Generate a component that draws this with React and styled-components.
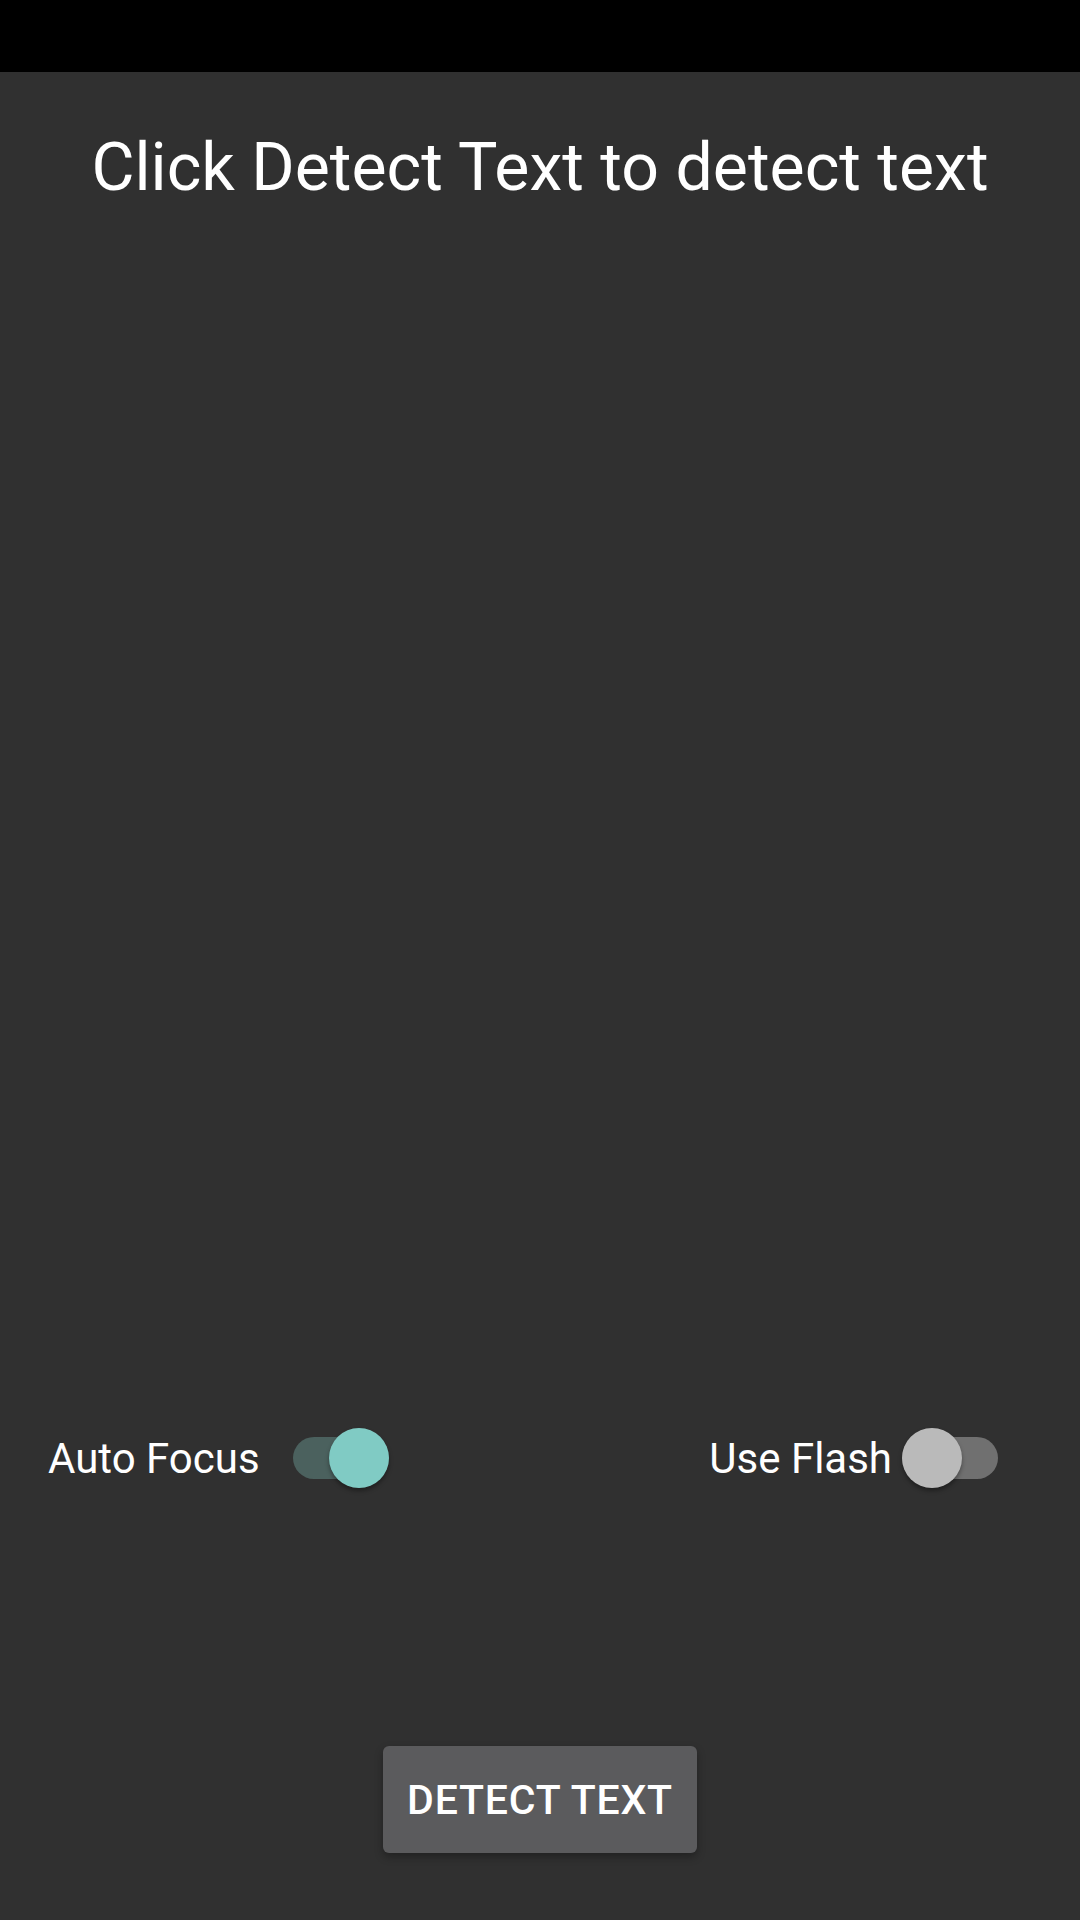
import React from 'react';
import styled, { createGlobalStyle } from 'styled-components';

const GlobalStyle = createGlobalStyle`
  html, body {
    margin: 0;
    padding: 0;
    background: #303030;
  }
  body {
    font-family: Roboto, "Noto Sans", "Liberation Sans", sans-serif;
  }
`;

function Switch({ checked, label, gap }) {
  return (
    <SwitchGroup gap={gap}>
      <Label>{label}</Label>
      <Track checked={checked}>
        <Thumb checked={checked} />
      </Track>
    </SwitchGroup>
  );
}

export default function App() {
  return (
    <>
      <GlobalStyle />
      <Screen>
        <StatusBar />
        <Title>Click Detect Text to detect text</Title>
        <Preview />
        <Controls>
          <Switch label="Auto Focus" checked gap="33px" />
          <Switch label="Use Flash" gap="10px" />
        </Controls>
        <ButtonBar>
          <DetectButton>Detect Text</DetectButton>
        </ButtonBar>
      </Screen>
    </>
  );
}

const Screen = styled.div`
  display: flex;
  flex-direction: column;
  min-height: 1920px;
  background: #303030;
  color: #fff;
`;

const StatusBar = styled.div`
  height: 72px;
  background: #000;
`;

const Title = styled.h1`
  margin: 57px 0 0;
  font-size: 66.2px;
  font-weight: 400;
  line-height: normal;
  text-align: center;
  color: #fff;
`;

const Preview = styled.div`
  flex: 1;
`;

const Controls = styled.div`
  display: flex;
  justify-content: space-between;
  align-items: center;
  height: 60px;
  padding: 0 82px 0 48px;
  margin-bottom: 258px;
`;

const SwitchGroup = styled.div`
  display: flex;
  align-items: center;
  gap: ${({ gap }) => gap};
`;

const Label = styled.span`
  font-size: 42px;
  color: #fff;
`;

const Track = styled.div`
  position: relative;
  width: 96px;
  height: 42px;
  border-radius: 21px;
  background: ${({ checked }) => (checked ? '#4b615e' : '#707070')};
`;

const Thumb = styled.div`
  position: absolute;
  top: -9px;
  left: ${({ checked }) => (checked ? '36px' : '0')};
  width: 60px;
  height: 60px;
  border-radius: 50%;
  background: ${({ checked }) => (checked ? '#80cbc4' : '#bababa')};
  box-shadow: 0 3px 4px rgba(0, 0, 0, 0.35);
`;

const ButtonBar = styled.div`
  display: flex;
  justify-content: center;
  margin-bottom: 67px;
`;

const DetectButton = styled.button`
  width: 314px;
  height: 107px;
  border: none;
  border-radius: 6px;
  background: #5b5b5d;
  color: #fff;
  font-family: Roboto, "Noto Sans", "Liberation Sans", sans-serif;
  font-size: 41px;
  font-weight: 500;
  letter-spacing: 0.8px;
  text-transform: uppercase;
  box-shadow: 0 4px 8px rgba(0, 0, 0, 0.3);
`;
